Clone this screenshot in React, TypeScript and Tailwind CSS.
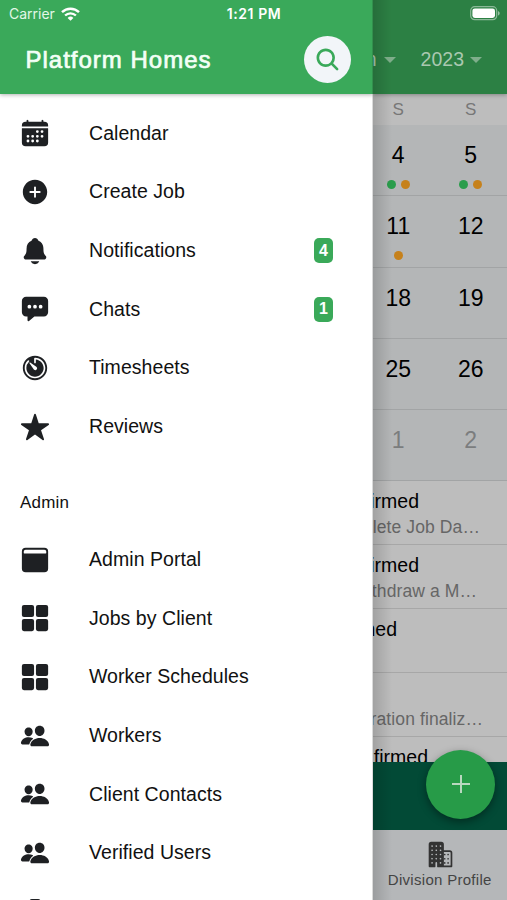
import { ReactNode } from 'react';
import {
  IoAddCircle,
  IoBrowsers,
  IoBusiness,
  IoCalendar,
  IoChatboxEllipses,
  IoClipboard,
  IoGrid,
  IoNotifications,
  IoPeople,
  IoSearch,
  IoStar,
  IoTimer
} from 'react-icons/io5';

interface MenuItem {
  label: string;
  icon: ReactNode;
  badge?: number;
}

interface Day {
  day: number;
  dots?: string[];
  muted?: boolean;
}

const mainItems: MenuItem[] = [
  { label: 'Calendar', icon: <IoCalendar size={30} /> },
  { label: 'Create Job', icon: <IoAddCircle size={30} /> },
  { label: 'Notifications', icon: <IoNotifications size={30} />, badge: 4 },
  { label: 'Chats', icon: <IoChatboxEllipses size={30} />, badge: 1 },
  { label: 'Timesheets', icon: <IoTimer size={30} /> },
  { label: 'Reviews', icon: <IoStar size={30} /> }
];

const adminItems: MenuItem[] = [
  { label: 'Admin Portal', icon: <IoBrowsers size={30} /> },
  { label: 'Jobs by Client', icon: <IoGrid size={30} /> },
  { label: 'Worker Schedules', icon: <IoGrid size={30} /> },
  { label: 'Workers', icon: <IoPeople size={30} /> },
  { label: 'Client Contacts', icon: <IoPeople size={30} /> },
  { label: 'Verified Users', icon: <IoPeople size={30} /> }
];

const days: Day[] = [
  { day: 4, dots: ['bg-[#2a9d4c]', 'bg-[#c6811b]'] },
  { day: 5, dots: ['bg-[#2a9d4c]', 'bg-[#c6811b]'] },
  { day: 11, dots: ['bg-[#c6811b]'] },
  { day: 12 },
  { day: 18 },
  { day: 19 },
  { day: 25 },
  { day: 26 },
  { day: 1, muted: true },
  { day: 2, muted: true }
];

function MenuRow({ item }: { item: MenuItem }) {
  return (
    <div className="flex h-[58.67px] shrink-0 items-center pl-5 pr-[39.5px] text-[#1e2023]">
      {item.icon}
      <span className="ml-[39px] flex-1 whitespace-nowrap text-[19.5px] tracking-[0.05px] text-[#111]">{item.label}</span>
      {item.badge && (
        <span className="flex h-[25px] w-[19px] items-center justify-center rounded-[5px] bg-[#3aa959] text-[16px] font-bold text-white">
          {item.badge}
        </span>
      )}
    </div>
  );
}

function Caret() {
  return (
    <svg width="12" height="6" viewBox="0 0 12 6" fill="currentColor">
      <path d="M0 0h12L6 6z" />
    </svg>
  );
}

function Wifi() {
  return (
    <svg width="19" height="14" viewBox="0 0 19 14" fill="none" stroke="white" strokeWidth="2.4">
      <path d="M1 5.2a12.2 12.2 0 0 1 17 0" />
      <path d="M4.1 8.5a7.8 7.8 0 0 1 10.8 0" />
      <path d="M9.5 13.8 6.6 10.9a4.2 4.2 0 0 1 5.8 0z" fill="white" stroke="none" />
    </svg>
  );
}

function Battery() {
  return (
    <svg width="31" height="15" viewBox="0 0 31 15">
      <rect x="0.7" y="0.7" width="26" height="13" rx="4" fill="none" stroke="white" strokeOpacity="0.45" strokeWidth="1.2" />
      <rect x="2.4" y="2.4" width="22.6" height="9.6" rx="2.4" fill="white" />
      <path d="M28 5v4.6c1-.4 1.7-1.3 1.7-2.3S29 5.4 28 5z" fill="white" fillOpacity="0.5" />
    </svg>
  );
}

function ListRow({ title, detail, titlePad, detailPad }: { title?: string; detail?: string; titlePad?: string; detailPad?: string }) {
  return (
    <div className="flex h-16 shrink-0 flex-col items-end border-b border-[#a7a7a7] pt-[7px]">
      <span className={`h-[26px] whitespace-nowrap text-[19.5px] leading-[26px] text-black ${titlePad}`}>{title}</span>
      <span className={`whitespace-nowrap text-[17.5px] leading-[26px] tracking-[0.1px] text-[#666] ${detailPad}`}>{detail}</span>
    </div>
  );
}

export default function App() {
  return (
    <div className="relative flex h-[900px] w-[507px] overflow-hidden bg-white font-['Liberation_Sans',Arial,sans-serif]">
      <aside className="flex w-[372.5px] shrink-0 flex-col overflow-hidden bg-white">
        <header className="relative flex h-[94px] shrink-0 items-end justify-between bg-[#3aa95a] pb-[11px] pl-[25.5px] pr-[22px] shadow-[0_1px_4px_rgba(0,0,0,0.3)]">
          <h1 className="whitespace-nowrap pb-[9px] text-[24px] leading-[28px] font-normal tracking-[1px] text-[#f3fff6] [-webkit-text-stroke:0.7px_#f3fff6]">Platform Homes</h1>
          <div className="flex size-[47px] items-center justify-center rounded-full bg-[#f2f5f9] text-[#3aa95a]">
            <IoSearch size={27} />
          </div>
        </header>
        <nav className="flex flex-col pt-[10px]">
          {mainItems.map((item) => (
            <MenuRow key={item.label} item={item} />
          ))}
          <div className="flex h-[74.3px] items-center pl-[20px] pt-[20px] text-[17px] tracking-[0.2px] text-[#111]">Admin</div>
          {adminItems.map((item) => (
            <MenuRow key={item.label} item={item} />
          ))}
          <div className="pl-5 pt-[16px] text-[#1e2023]">
            <IoClipboard size={30} />
          </div>
        </nav>
      </aside>

      <main className="flex min-w-0 flex-1 flex-col overflow-hidden bg-[#bdbdbd]">
        <header className="relative flex h-[94px] shrink-0 items-center justify-end bg-[#2c8044] pr-[25px] pt-[26px] text-[19.5px] text-[#a9c8b0] shadow-[0_1px_4px_rgba(0,0,0,0.3)]">
          <span>n</span>
          <span className="ml-[7px] mr-[25px] text-[#7fae8b]"><Caret /></span>
          <span>2023</span>
          <span className="ml-[6px] text-[#7fae8b]"><Caret /></span>
        </header>
        <div className="-ml-[10.5px] grid h-[31px] w-[145px] shrink-0 grid-cols-2 items-center text-center text-[17px] text-[#777]">
          <span>S</span>
          <span>S</span>
        </div>
        <div className="-ml-[10.5px] grid w-[145px] shrink-0 grid-cols-2 bg-[#b4b6b7]">
          {days.map(({ day, dots, muted }) => (
            <div key={day} className="flex h-[71.3px] flex-col items-center border-b border-[#a2a4a5] pt-[15px]">
              <span className={muted ? 'text-[23px] leading-[30px] text-[#7b7d7e]' : 'text-[23px] leading-[30px] text-black'}>{day}</span>
              <div className="mt-[10px] flex gap-[5px]">
                {dots?.map((dot) => (
                  <span key={dot} className={`size-[9px] rounded-full ${dot}`} />
                ))}
              </div>
            </div>
          ))}
        </div>
        <section className="flex h-[280.5px] shrink-0 flex-col overflow-hidden">
          <ListRow title="irmed" detail="elete Job Da…" titlePad="pr-[88px]" detailPad="pr-[27px]" />
          <ListRow title="irmed" detail="ithdraw a M…" titlePad="pr-[88px]" detailPad="pr-[30px]" />
          <ListRow title="ned" titlePad="pr-[110px]" />
          <ListRow detail="uration finaliz…" detailPad="pr-[24px]" />
          <ListRow title="firmed" titlePad="pr-[79px]" />
        </section>
        <div className="h-[68px] shrink-0 bg-[#024a36]" />
        <footer className="flex flex-1 flex-col items-center bg-[#b5b7b9] pt-[11px] text-[#333]">
          <IoBusiness size={27} className="ml-[2px]" />
          <span className="mt-[3px] whitespace-nowrap text-[15px] leading-[18px] tracking-[0.3px] text-[#444]">Division Profile</span>
        </footer>
      </main>

      {/* drawer edge shadow */}
      <div className="absolute inset-y-0 left-[372px] w-[20px] bg-gradient-to-r from-black/15 to-transparent" />

      {/* floating add button */}
      <div className="absolute left-[426px] top-[749.5px] flex size-[69px] items-center justify-center rounded-full bg-[#279b48] shadow-[0_3px_8px_rgba(0,0,0,0.4)]">
        <svg width="18" height="18" viewBox="0 0 18 18" stroke="#b9d8bf" strokeWidth="2">
          <path d="M9 0v18M0 9h18" />
        </svg>
      </div>

      {/* status bar */}
      <div className="absolute inset-x-0 top-0 grid h-[27px] grid-cols-3 items-center pl-[9px] pr-[6px] font-['Inter',sans-serif] text-[14px] text-white">
        <div className="flex items-center gap-[6px]">
          <span className="text-[#e2f7e7]">Carrier</span>
          <Wifi />
        </div>
        <span className="pr-[2px] text-center font-semibold tracking-[0.6px]">1:21 PM</span>
        <div className="flex justify-end"><Battery /></div>
      </div>
    </div>
  );
}
